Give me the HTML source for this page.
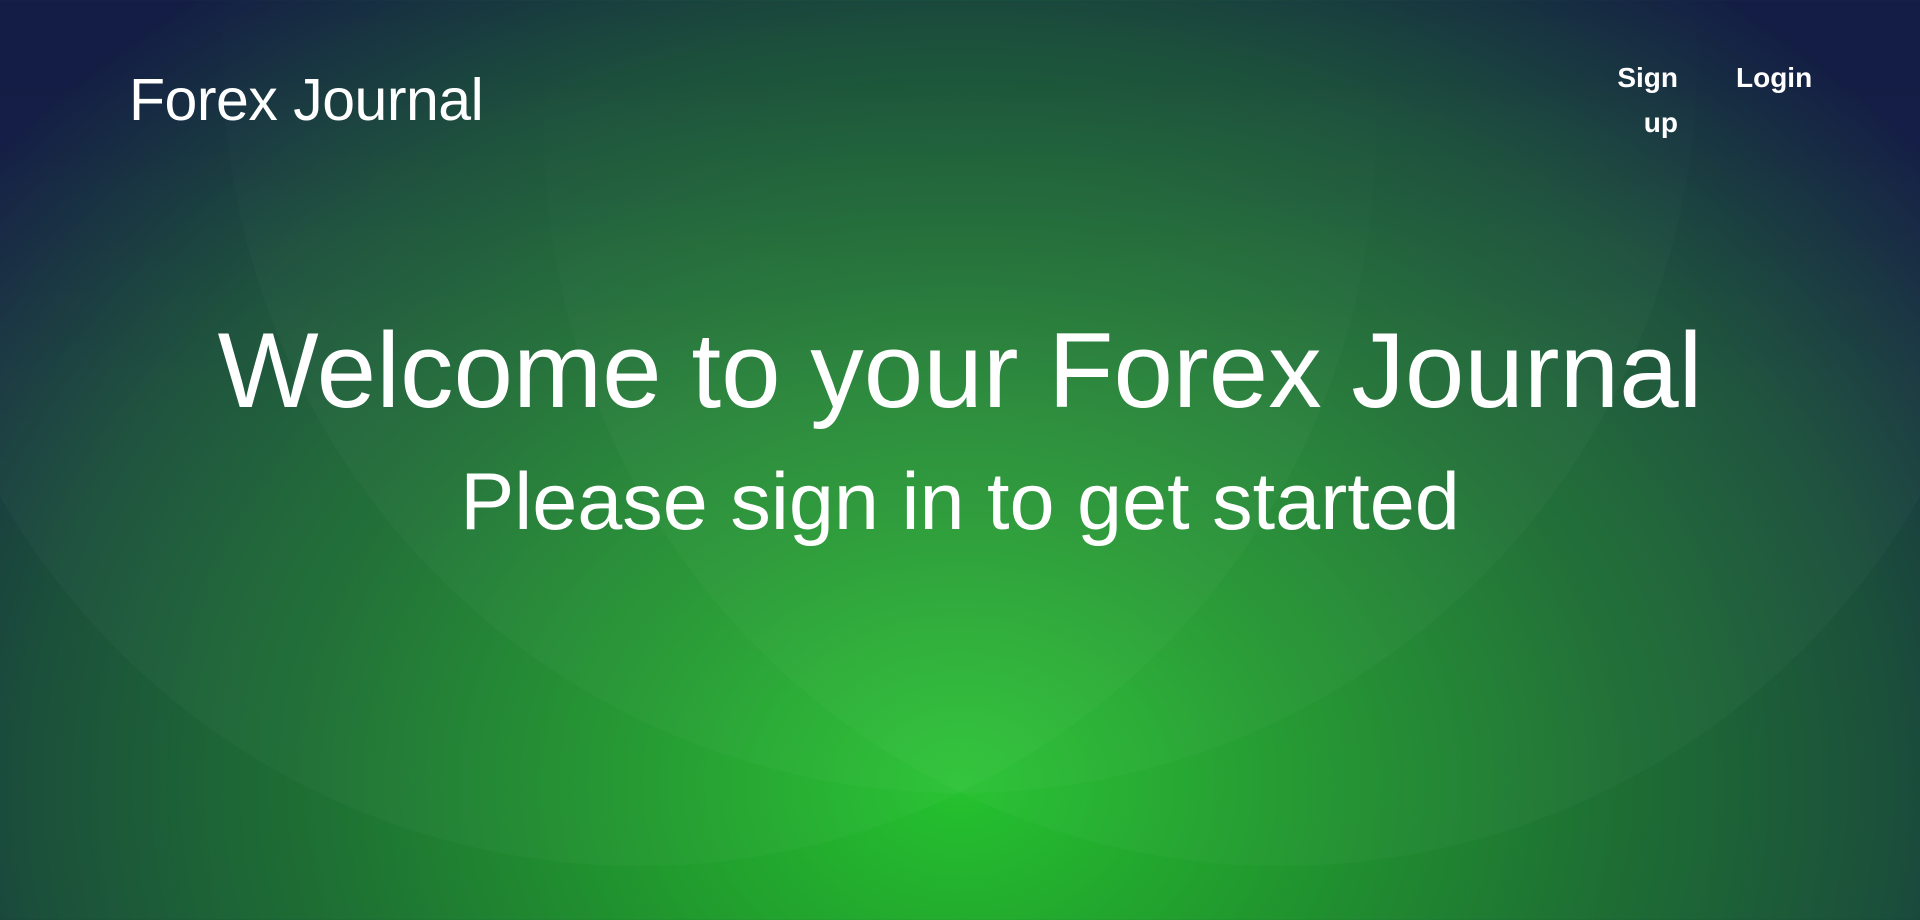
<!DOCTYPE html>
<html><head><meta charset="utf-8"><style>
html,body{margin:0;padding:0;width:1920px;height:920px;overflow:hidden}
body{position:relative;font-family:"Liberation Sans",sans-serif;color:#fff;
background:radial-gradient(ellipse 1250px 1000px at 960px 784px,#25c22f 0%,#219a2e 25%,#1e7233 50%,#1b4f3b 75%,#141d45 100%);}
.c{position:absolute;border-radius:50%;width:1474px;height:1474px;background:linear-gradient(to bottom,rgba(255,255,255,0) 45%,rgba(255,255,255,0.025) 70%)}
.logo{position:absolute;left:129px;top:66px;font-size:59px;letter-spacing:-0.5px}
.nav{position:absolute;top:55px;font-size:28px;font-weight:bold;line-height:45px}
h1{position:absolute;left:0;width:1920px;top:308px;margin:0;text-align:center;font-size:107px;font-weight:normal}
h2{position:absolute;left:0;width:1920px;top:456px;margin:0;text-align:center;font-size:81px;font-weight:normal}
</style></head><body>
<div class="c" style="left:-98px;top:-608px"></div>
<div class="c" style="left:223px;top:-681px"></div>
<div class="c" style="left:544px;top:-608px"></div>
<div class="logo">Forex Journal</div>
<div class="nav" style="left:1612px;width:66px;text-align:right">Sign<br>up</div>
<div class="nav" style="left:1736px">Login</div>
<h1>Welcome to your Forex Journal</h1>
<h2>Please sign in to get started</h2>
</body></html>
